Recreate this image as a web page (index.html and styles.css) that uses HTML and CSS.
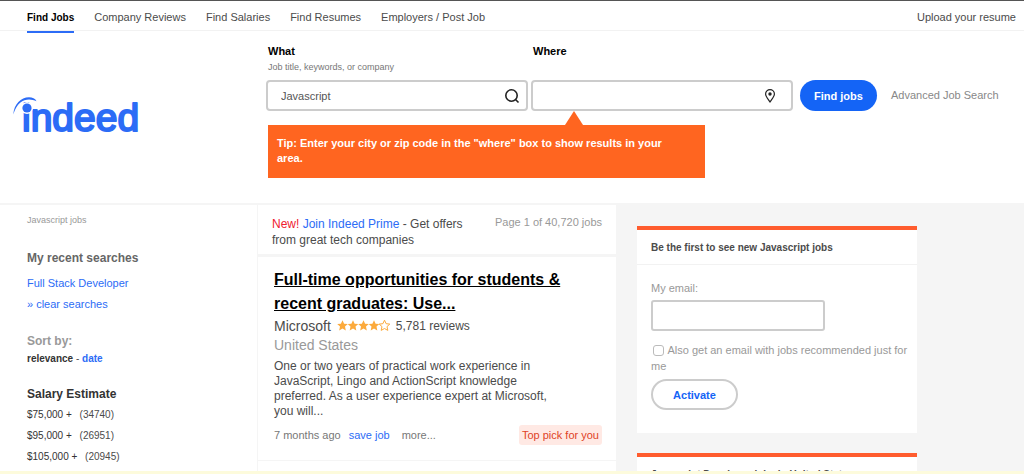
FILE: index.html
```html
<!DOCTYPE html>
<html lang="en">
<head>
    <meta charset="UTF-8">
    <meta name="viewport" content="width=device-width, initial-scale=1.0">
    <title>Javascript jobs | Indeed.com</title>
    <link rel="stylesheet" href="styles.css">
</head>
<body>
    <!-- Top navigation -->
    <nav class="topnav">
        <a href="#" class="active">Find Jobs</a>
        <a href="#">Company Reviews</a>
        <a href="#">Find Salaries</a>
        <a href="#">Find Resumes</a>
        <a href="#">Employers / Post Job</a>
        <a href="#" class="upload">Upload your resume</a>
    </nav>

    <!-- Logo and search -->
    <header class="header">
        <a href="#" class="logo">
            <svg width="130" height="42" viewBox="0 0 130 42">
                <text class="logo-text" x="9" y="34">indeed</text>
                <circle class="logo-gap" cx="14" cy="11" r="6"/>
                <circle class="logo-swoosh" cx="14" cy="11" r="4.6"/>
                <path class="logo-swoosh" d="M.3 17.500C1 7 8 .3 16 .3c3.500 0 6 1 7.500 4C16 .5 5 1.500.3 17.500z"/>
            </svg>
        </a>
        <form class="search">
            <div class="field">
                <label for="what">What</label>
                <span class="hint">Job title, keywords, or company</span>
                <div class="box">
                    <input type="text" id="what" value="Javascript">
                    <svg class="icon" width="16" height="16" viewBox="0 0 16 16">
                        <circle cx="7.500" cy="7.500" r="5.700"/>
                        <path d="M11.500 11.500l3 3"/>
                    </svg>
                </div>
            </div>
            <div class="field">
                <label for="where">Where</label>
                <span class="hint"></span>
                <div class="box where">
                    <input type="text" id="where">
                    <svg class="icon pin" width="12" height="14" viewBox="0 0 12 14">
                        <path d="M6 13C4 10 1.600 7.500 1.600 5a4.400 4.400 0 0 1 8.800 0C10.400 7.500 8 10 6 13z"/>
                        <circle class="dot" cx="6" cy="5" r="1.700"/>
                    </svg>
                </div>
            </div>
            <button type="submit" class="find-btn">Find jobs</button>
            <a href="#" class="advanced">Advanced Job Search</a>
        </form>
        <div class="tip">Tip: Enter your city or zip code in the "where" box to show results in your area.</div>
    </header>

    <main class="content">
        <!-- Left filters -->
        <aside class="sidebar">
            <p class="crumb">Javascript jobs</p>
            <section class="recent">
                <h2>My recent searches</h2>
                <a href="#">Full Stack Developer</a>
                <a href="#">» clear searches</a>
            </section>
            <section class="sort">
                <h2>Sort by:</h2>
                <p><b>relevance</b> - <a href="#">date</a></p>
            </section>
            <section class="salary">
                <h2>Salary Estimate</h2>
                <ul>
                    <li><a href="#">$75,000 +</a> <span>(34740)</span></li>
                    <li><a href="#">$95,000 +</a> <span>(26951)</span></li>
                    <li><a href="#">$105,000 +</a> <span>(20945)</span></li>
                </ul>
            </section>
        </aside>

        <!-- Results -->
        <div class="results">
            <div class="promo">
                <p><span class="new">New!</span> <a href="#">Join Indeed Prime</a> - Get offers from great tech companies</p>
                <span class="count">Page 1 of 40,720 jobs</span>
            </div>
            <article class="job">
                <h2><a href="#">Full-time opportunities for students &amp; recent graduates: Use...</a></h2>
                <div class="company">
                    <span>Microsoft</span>
                    <svg class="stars" width="53" height="11" viewBox="0 0 53 11">
                        <defs>
                            <path id="star" d="M5.500 .2l1.600 3.500 3.700.4-2.800 2.500.8 3.800-3.300-1.900-3.300 1.900.8-3.800L.2 4.100l3.700-.4z"/>
                        </defs>
                        <use href="#star"/>
                        <use href="#star" x="10.500"/>
                        <use href="#star" x="21"/>
                        <use href="#star" x="31.500"/>
                        <use href="#star" x="42" class="empty"/>
                    </svg>
                    <a href="#" class="reviews">5,781 reviews</a>
                </div>
                <p class="location">United States</p>
                <p class="summary">One or two years of practical work experience in JavaScript, Lingo and ActionScript knowledge preferred. As a user experience expert at Microsoft, you will...</p>
                <div class="job-footer">
                    <span>7 months ago</span>
                    <a href="#" class="save">save job</a>
                    <a href="#" class="more">more...</a>
                    <span class="badge">Top pick for you</span>
                </div>
            </article>
            <article class="job"></article>
        </div>

        <!-- Right column -->
        <div class="right">
            <section class="panel">
                <h3>Be the first to see new Javascript jobs</h3>
                <form class="alert">
                    <label for="email">My email:</label>
                    <input type="email" id="email">
                    <label class="also"><input type="checkbox"> Also get an email with jobs recommended just for me</label>
                    <button type="submit">Activate</button>
                </form>
            </section>
            <section class="panel">
                <h3>Javascript Developer jobs in United States</h3>
            </section>
        </div>
    </main>
    <div class="notice"></div>
</body>
</html>
```

FILE: styles.css
```css
* { box-sizing: border-box; margin: 0; padding: 0; }
body {
    display: flex; flex-direction: column; height: 100vh; overflow: hidden;
    background: #fff; color: #4b4b4b;
    font-family: "Liberation Sans", Arial, sans-serif; font-size: 11px; line-height: 16px;
}
a { color: #2c6cf6; text-decoration: none; }
button, input { font-family: inherit; font-size: 11px; }
ul { list-style: none; }

/* Top navigation */
.topnav {
    display: flex; flex-shrink: 0; gap: 20px; height: 31px; padding: 0 8px 0 27px;
    border-top: 1px solid #555; border-bottom: 1px solid #f2f2f2;
}
.topnav a { height: 32px; line-height: 33px; color: #4b4b4b; white-space: nowrap; }
.topnav .active { color: #000; font-weight: bold; font-size: 10px; border-bottom: 2px solid #2c6cf6; }
.topnav .upload { margin-left: auto; }

/* Header */
.header {
    display: grid; flex-shrink: 0; grid-template-columns: 266px 1fr; grid-template-rows: auto 1fr;
    height: 172px; padding-top: 12px;
}
.logo { grid-row: 1 / 3; padding: 54px 0 0 13px; }
.logo svg { display: block; }
.logo-swoosh { fill: #2c6cf6; }
.logo-gap { fill: #fff; }
.logo-text { fill: #2c6cf6; stroke: #2c6cf6; stroke-width: 2px; stroke-linejoin: round; font-size: 39px; }
.search { display: flex; align-items: flex-end; height: 68px; }
.field { flex: 1 1 0; max-width: 262px; margin-right: 3px; }
.field label { display: block; padding-left: 2px; color: #000; font-weight: bold; font-size: 11px; }
.hint { display: block; height: 16px; padding-left: 2px; color: #777; font-size: 9px; }
.box {
    display: flex; align-items: center; height: 31px; margin-top: 5px; padding: 0 6px 0 13px;
    border: 2px solid #ccc; border-radius: 4px;
}
.box.where { padding-right: 15px; }
.box input { flex: 1; min-width: 0; border: 0; outline: 0; background: none; color: #555; }
.icon { fill: none; stroke: #222; stroke-width: 1.6; }
.icon.pin { stroke-width: 1.2; }
.icon .dot { fill: #222; stroke: none; }
.find-btn {
    width: 77px; height: 31px; margin-left: 4px; border: 0; border-radius: 16px;
    background: #1464f6; color: #fff; font-weight: bold;
}
.advanced { padding-left: 14px; line-height: 31px; color: #888; white-space: nowrap; }
.tip {
    position: relative; justify-self: start; align-self: start; width: 437px; height: 53px;
    margin: 14px 0 0 2px; padding: 11px 20px 11px 9px; background: #ff6520; color: #fff;
    font-weight: bold; line-height: 15px;
}
.tip::before {
    content: ""; position: absolute; left: 297px; bottom: 100%;
    border: 9px solid transparent; border-top: 0; border-bottom: 14px solid #ff6520;
}

/* Main columns */
.content {
    display: grid; flex: 1; min-height: 0; overflow: hidden; padding-top: 2px;
    grid-template-columns: 257px minmax(0, 358px) minmax(0, 1fr); column-gap: 1px; background: #f5f5f5;
}
.sidebar { padding: 7px 16px 0 27px; background: #fff; }
.sidebar h2 { color: #666; font-size: 12px; line-height: 20px; }
.crumb { color: #999; font-size: 9px; }
.recent { padding-top: 20px; }
.recent h2 { margin-bottom: 5px; }
.recent a { display: block; line-height: 21px; }
.sort { padding-top: 16px; }
.sort h2 { color: #999; }
.sort b { color: #333; }
.sort p { font-size: 10px; }
.sort a { font-weight: bold; }
.salary { padding-top: 17px; }
.salary h2 { color: #333; }
.salary li { line-height: 21px; font-size: 10px; }
.salary li a { margin-right: 5px; color: #333; }

/* Results */
.results { display: flex; flex-direction: column; }
.promo {
    display: flex; justify-content: space-between; flex-shrink: 0; height: 49px;
    padding: 11px 14px 0; margin-bottom: 3px; background: #fff; font-size: 12px;
}
.promo p { width: 210px; }
.new { color: #f02030; }
.count { color: #999; font-size: 11px; line-height: 12px; }
.job { flex-shrink: 0; height: 203px; margin-bottom: 1px; padding: 11px 14px 0 16px; background: #fff; }
.job h2 { font-size: 16px; line-height: 24px; }
.job h2 a { color: #000; text-decoration: underline; }
.company { display: flex; align-items: center; gap: 6px; height: 19px; font-size: 14px; }
.stars { fill: #fcaa3c; }
.stars .empty { fill: none; stroke: #fcaa3c; }
.reviews { color: #4b4b4b; font-size: 12px; }
.location { color: #999; font-size: 14px; line-height: 20px; }
.summary { max-width: 290px; margin-top: 4px; font-size: 12px; line-height: 15px; }
.job-footer { display: flex; align-items: center; height: 20px; margin-top: 6px; color: #777; }
.save { margin-left: 8px; }
.more { margin-left: 12px; color: #777; }
.badge {
    margin-left: auto; padding: 0 3px; border-radius: 3px;
    background: #ffe9e4; color: #e04326; line-height: 20px;
}

/* Right column */
.right { padding: 21px 20px 0; }
.panel { max-width: 280px; margin-bottom: 20px; border-top: 4px solid #ff5c2e; background: #fff; }
.panel h3 { padding: 10px 14px 8px; border-bottom: 1px solid #f2f2f2; font-size: 10px; }
.alert { height: 168px; padding: 15px 4px 0 14px; color: #999; }
.alert label { display: block; }
.alert input[type="email"] {
    display: block; width: 174px; height: 31px; margin: 4px 0 11px;
    border: 2px solid #ccc; border-radius: 3px;
}
.alert input[type="checkbox"] {
    appearance: none; width: 11px; height: 11px; margin: 0 1px 0 2px; vertical-align: -2px;
    border: 1px solid #bbb; border-radius: 3px;
}
.alert button {
    display: block; width: 87px; height: 31px; margin-top: 5px; border: 2px solid #ccc;
    border-radius: 16px; background: #fff; color: #1464f6; font-weight: bold;
}
.notice { flex-shrink: 0; height: 3px; background: #fdfbdc; }
```
